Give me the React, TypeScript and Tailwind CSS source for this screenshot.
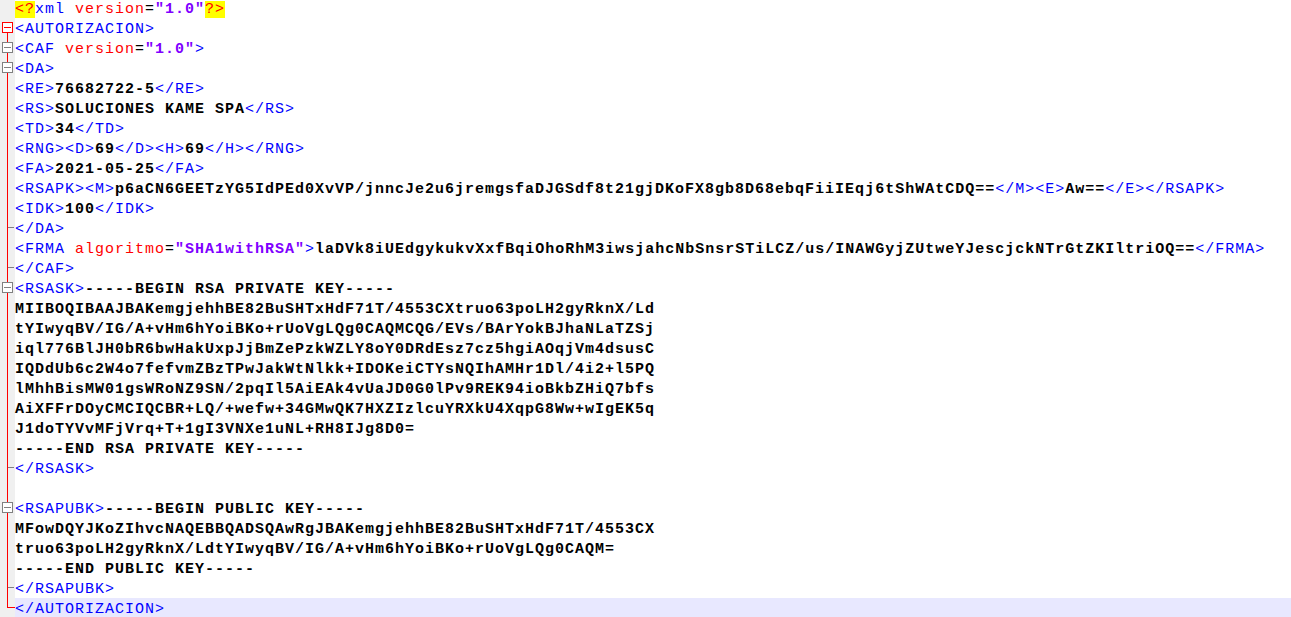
import React from "react";

type Kind = "tag" | "attr" | "eq" | "val" | "txt" | "pi" | "sp";
type Seg = [Kind, string];
type Mark = "none" | "headRed" | "boxGray" | "line" | "tick" | "end";

const cls: Record<Kind, string> = {
  tag: "text-[#0000ff]",
  attr: "text-[#ff0000]",
  eq: "text-black",
  val: "text-[#8000ff] font-bold",
  txt: "text-black font-bold",
  pi: "text-[#ff0000] bg-[#ffff00]",
  sp: "",
};

const lines: { segs: Seg[]; mark: Mark }[] = [
  { mark: "none", segs: [["pi", "<?"], ["tag", "xml"], ["sp", " "], ["attr", "version"], ["eq", "="], ["val", '"1.0"'], ["pi", "?>"]] },
  { mark: "headRed", segs: [["tag", "<AUTORIZACION>"]] },
  { mark: "boxGray", segs: [["tag", "<CAF"], ["sp", " "], ["attr", "version"], ["eq", "="], ["val", '"1.0"'], ["tag", ">"]] },
  { mark: "boxGray", segs: [["tag", "<DA>"]] },
  { mark: "line", segs: [["tag", "<RE>"], ["txt", "76682722-5"], ["tag", "</RE>"]] },
  { mark: "line", segs: [["tag", "<RS>"], ["txt", "SOLUCIONES KAME SPA"], ["tag", "</RS>"]] },
  { mark: "line", segs: [["tag", "<TD>"], ["txt", "34"], ["tag", "</TD>"]] },
  { mark: "line", segs: [["tag", "<RNG><D>"], ["txt", "69"], ["tag", "</D><H>"], ["txt", "69"], ["tag", "</H></RNG>"]] },
  { mark: "line", segs: [["tag", "<FA>"], ["txt", "2021-05-25"], ["tag", "</FA>"]] },
  {
    mark: "line",
    segs: [
      ["tag", "<RSAPK><M>"],
      ["txt", "p6aCN6GEETzYG5IdPEd0XvVP/jnncJe2u6jremgsfaDJGSdf8t21gjDKoFX8gb8D68ebqFiiIEqj6tShWAtCDQ=="],
      ["tag", "</M><E>"],
      ["txt", "Aw=="],
      ["tag", "</E></RSAPK>"],
    ],
  },
  { mark: "line", segs: [["tag", "<IDK>"], ["txt", "100"], ["tag", "</IDK>"]] },
  { mark: "tick", segs: [["tag", "</DA>"]] },
  {
    mark: "line",
    segs: [
      ["tag", "<FRMA"],
      ["sp", " "],
      ["attr", "algoritmo"],
      ["eq", "="],
      ["val", '"SHA1withRSA"'],
      ["tag", ">"],
      ["txt", "laDVk8iUEdgykukvXxfBqiOhoRhM3iwsjahcNbSnsrSTiLCZ/us/INAWGyjZUtweYJescjckNTrGtZKIltriOQ=="],
      ["tag", "</FRMA>"],
    ],
  },
  { mark: "tick", segs: [["tag", "</CAF>"]] },
  { mark: "boxGray", segs: [["tag", "<RSASK>"], ["txt", "-----BEGIN RSA PRIVATE KEY-----"]] },
  { mark: "line", segs: [["txt", "MIIBOQIBAAJBAKemgjehhBE82BuSHTxHdF71T/4553CXtruo63poLH2gyRknX/Ld"]] },
  { mark: "line", segs: [["txt", "tYIwyqBV/IG/A+vHm6hYoiBKo+rUoVgLQg0CAQMCQG/EVs/BArYokBJhaNLaTZSj"]] },
  { mark: "line", segs: [["txt", "iql776BlJH0bR6bwHakUxpJjBmZePzkWZLY8oY0DRdEsz7cz5hgiAOqjVm4dsusC"]] },
  { mark: "line", segs: [["txt", "IQDdUb6c2W4o7fefvmZBzTPwJakWtNlkk+IDOKeiCTYsNQIhAMHr1Dl/4i2+l5PQ"]] },
  { mark: "line", segs: [["txt", "lMhhBisMW01gsWRoNZ9SN/2pqIl5AiEAk4vUaJD0G0lPv9REK94ioBkbZHiQ7bfs"]] },
  { mark: "line", segs: [["txt", "AiXFFrDOyCMCIQCBR+LQ/+wefw+34GMwQK7HXZIzlcuYRXkU4XqpG8Ww+wIgEK5q"]] },
  { mark: "line", segs: [["txt", "J1doTYVvMFjVrq+T+1gI3VNXe1uNL+RH8IJg8D0="]] },
  { mark: "line", segs: [["txt", "-----END RSA PRIVATE KEY-----"]] },
  { mark: "tick", segs: [["tag", "</RSASK>"]] },
  { mark: "line", segs: [] },
  { mark: "boxGray", segs: [["tag", "<RSAPUBK>"], ["txt", "-----BEGIN PUBLIC KEY-----"]] },
  { mark: "line", segs: [["txt", "MFowDQYJKoZIhvcNAQEBBQADSQAwRgJBAKemgjehhBE82BuSHTxHdF71T/4553CX"]] },
  { mark: "line", segs: [["txt", "truo63poLH2gyRknX/LdtYIwyqBV/IG/A+vHm6hYoiBKo+rUoVgLQg0CAQM="]] },
  { mark: "line", segs: [["txt", "-----END PUBLIC KEY-----"]] },
  { mark: "tick", segs: [["tag", "</RSAPUBK>"]] },
  { mark: "end", segs: [["tag", "</AUTORIZACION>"]] },
];

const RED = "#ff0000";
const GRAY = "#808080";

function Marker({ mark }: { mark: Mark }) {
  if (mark === "none") return null;
  return (
    <svg width="15" height="20" viewBox="0 0 15 20" className="block">
      {mark === "headRed" && (
        <>
          <line x1="7.5" y1="14" x2="7.5" y2="20" stroke={RED} />
          <rect x="2.5" y="4.5" width="10" height="10" fill="#fff" stroke={RED} />
          <line x1="4" y1="9.5" x2="11" y2="9.5" stroke={RED} />
        </>
      )}
      {mark === "boxGray" && (
        <>
          <line x1="7.5" y1="0" x2="7.5" y2="20" stroke={RED} />
          <rect x="2.5" y="4.5" width="10" height="10" fill="#fff" stroke={GRAY} />
          <line x1="4" y1="9.5" x2="11" y2="9.5" stroke={GRAY} />
        </>
      )}
      {mark === "line" && <line x1="7.5" y1="0" x2="7.5" y2="20" stroke={RED} />}
      {mark === "tick" && (
        <>
          <line x1="7.5" y1="0" x2="7.5" y2="20" stroke={RED} />
          <line x1="8" y1="9.5" x2="14" y2="9.5" stroke={GRAY} />
        </>
      )}
      {mark === "end" && (
        <>
          <line x1="7.5" y1="0" x2="7.5" y2="10" stroke={RED} />
          <line x1="7" y1="9.5" x2="15" y2="9.5" stroke={RED} />
        </>
      )}
    </svg>
  );
}

export default function App() {
  return (
    <div className="w-[1291px] h-[617px] overflow-hidden bg-white">
      <div
        className="-mt-[2px] flex flex-col text-[15px] leading-[20px] tracking-[1px]"
        style={{ fontFamily: '"Liberation Mono", "Courier New", monospace' }}
      >
        {lines.map((ln, i) => {
          const current = i === lines.length - 1;
          return (
            <div key={i} className="flex h-[20px]">
              <div className="w-[15px] shrink-0 bg-[#f0f0f0]">
                <Marker mark={ln.mark} />
              </div>
              <div className={`flex-1 h-[20px] pt-[2px] whitespace-pre ${current ? "bg-[#e8e8ff]" : ""}`}>
                {ln.segs.map((s, j) => (
                  <span key={j} className={cls[s[0]]}>
                    {s[1]}
                  </span>
                ))}
              </div>
            </div>
          );
        })}
      </div>
    </div>
  );
}
